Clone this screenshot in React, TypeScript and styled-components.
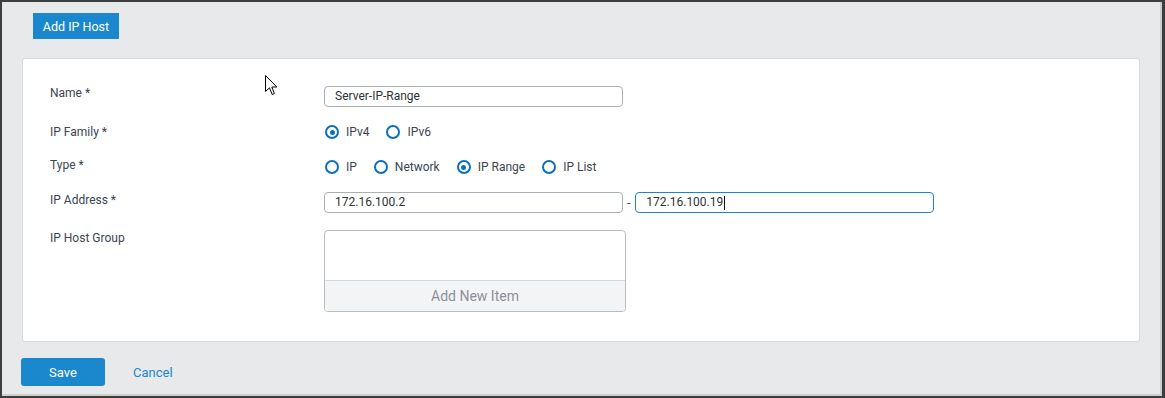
import React from "react";
import styled, { createGlobalStyle } from "styled-components";

const GlobalStyle = createGlobalStyle`
  body {
    margin: 0;
    font-family: Roboto, "Liberation Sans", sans-serif;
  }
`;

const Frame = styled.div`
  position: relative;
  box-sizing: border-box;
  width: 1165px;
  height: 398px;
  display: flex;
  flex-direction: column;
  padding: 11px 22px 0 19px;
  background: #e8e9eb;
  border-top: 2px solid #3e3e3e;
  border-left: 2px solid #3e3e3e;
  border-right: 3px solid #3e3e3e;
  border-bottom: 2px solid #3e3e3e;
  box-shadow: inset -2px -2px 0 #cdced0;
`;

const Toolbar = styled.div`
  display: flex;
  padding-left: 12px;
`;

const Button = styled.button<{ $size: "header" | "save" }>`
  box-sizing: border-box;
  border: none;
  padding: 0;
  font-family: inherit;
  font-size: ${({ $size }) => ($size === "header" ? "12.5px" : "13px")};
  color: #ffffff;
  background: #1b87cd;
  cursor: pointer;
  width: ${({ $size }) => ($size === "header" ? "86px" : "84px")};
  height: ${({ $size }) => ($size === "header" ? "26px" : "28px")};
  border-radius: ${({ $size }) => ($size === "header" ? "0" : "3px")};
`;

const Card = styled.div`
  margin: 19px 0 0 1px;
  background: #ffffff;
  border: 1px solid #dadbdd;
  border-radius: 3px;
  padding: 27px 0 29px 27px;
  display: flex;
  flex-direction: column;
`;

const Row = styled.div<{ $gap?: number }>`
  display: grid;
  grid-template-columns: 274px auto;
  align-items: start;
  margin-top: ${({ $gap }) => $gap ?? 0}px;
`;

const Label = styled.div<{ $shift?: number }>`
  font-size: 12px;
  line-height: 16px;
  color: #3b4552;
  margin-top: ${({ $shift }) => $shift ?? 0}px;
`;

const Controls = styled.div`
  display: flex;
  align-items: center;
`;

const RadioGroup = styled.div`
  display: flex;
  align-items: center;
  height: 20px;
  gap: 17px;
  padding-left: 1px;
`;

const RadioItem = styled.label`
  display: flex;
  align-items: center;
  gap: 7px;
  font-size: 12px;
  color: #3b4552;
`;

const RadioCircle = styled.span<{ $checked?: boolean }>`
  box-sizing: border-box;
  width: 14px;
  height: 14px;
  border: 2px solid #0b6fbf;
  border-radius: 50%;
  display: flex;
  align-items: center;
  justify-content: center;
  &::after {
    content: "";
    width: 5px;
    height: 5px;
    border-radius: 50%;
    background: ${({ $checked }) => ($checked ? "#0b6fbf" : "transparent")};
  }
`;

const Field = styled.div<{ $focused?: boolean }>`
  box-sizing: border-box;
  width: 299px;
  height: 21px;
  padding: 0 10px;
  border: 1px solid ${({ $focused }) => ($focused ? "#1a86cc" : "#a8afb7")};
  border-radius: 4px;
  font-size: 12px;
  line-height: 19px;
  color: #2e3338;
  display: flex;
  align-items: center;
`;

const Caret = styled.span`
  display: inline-block;
  width: 1px;
  height: 14px;
  background: #111111;
  margin-left: 1px;
`;

const Dash = styled.span`
  font-size: 12px;
  color: #3b4552;
  margin: 0 5px 0 4px;
`;

const GroupBox = styled.div`
  box-sizing: border-box;
  width: 302px;
  height: 82px;
  border: 1px solid #b6bcc2;
  border-radius: 4px;
  display: flex;
  flex-direction: column;
  overflow: hidden;
`;

const GroupList = styled.div`
  flex: 1;
`;

const AddItem = styled.div`
  height: 30px;
  border-top: 1px solid #d6d9dc;
  background: #f3f4f6;
  display: flex;
  align-items: center;
  justify-content: center;
  font-size: 14px;
  color: #8c9096;
`;

const Footer = styled.div`
  display: flex;
  align-items: center;
  margin-top: 16px;
`;

const CancelLink = styled.a`
  margin-left: 28px;
  font-size: 13px;
  color: #1a87cd;
  text-decoration: none;
  cursor: pointer;
`;

const Pointer = styled.svg`
  position: absolute;
  left: 263px;
  top: 73px;
`;

const Radio = ({ label, checked }: { label: string; checked?: boolean }) => (
  <RadioItem>
    <RadioCircle $checked={checked} />
    {label}
  </RadioItem>
);

const App = () => {
  return (
    <>
      <GlobalStyle />
      <Frame>
        <Toolbar>
          <Button $size="header">Add IP Host</Button>
        </Toolbar>
        <Card>
          <Row>
            <Label $shift={-1}>Name *</Label>
            <Field>Server-IP-Range</Field>
          </Row>
          <Row $gap={15}>
            <Label $shift={2}>IP Family *</Label>
            <RadioGroup>
              <Radio label="IPv4" checked />
              <Radio label="IPv6" />
            </RadioGroup>
          </Row>
          <Row $gap={15}>
            <Label>Type *</Label>
            <RadioGroup>
              <Radio label="IP" />
              <Radio label="Network" />
              <Radio label="IP Range" checked />
              <Radio label="IP List" />
            </RadioGroup>
          </Row>
          <Row $gap={15}>
            <Label>IP Address *</Label>
            <Controls>
              <Field>172.16.100.2</Field>
              <Dash>-</Dash>
              <Field $focused>
                172.16.100.19
                <Caret />
              </Field>
            </Controls>
          </Row>
          <Row $gap={17}>
            <Label>IP Host Group</Label>
            <GroupBox>
              <GroupList />
              <AddItem>Add New Item</AddItem>
            </GroupBox>
          </Row>
        </Card>
        <Footer>
          <Button $size="save">Save</Button>
          <CancelLink>Cancel</CancelLink>
        </Footer>
        <Pointer width="13" height="21" viewBox="0 0 13 21">
          <path
            d="M0.5 0.5 V16.5 L4.5 12.8 L7.2 19.5 L9.4 18.5 L6.8 12 H11.8 Z"
            fill="#ffffff"
            stroke="#000000"
            strokeWidth="1"
          />
        </Pointer>
      </Frame>
    </>
  );
};

export default App;
